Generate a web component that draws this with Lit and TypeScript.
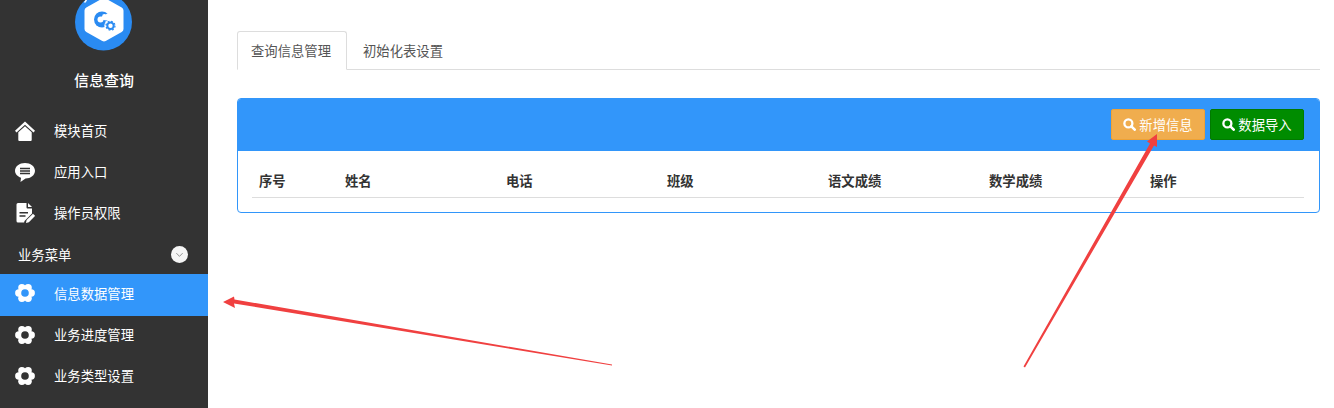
import { LitElement, html, css, svg } from "lit";
import { customElement } from "lit/decorators.js";

const lobes = [0, 60, 120, 180, 240, 300].map((a) => {
  const r = (a * Math.PI) / 180;
  return svg`<circle cx=${(10 + 6.2 * Math.cos(r)).toFixed(2)} cy=${(10 + 6.2 * Math.sin(r)).toFixed(2)} r="3.700"/>`;
});

const search = html`<svg class="mag" viewBox="0 0 14 14" width="13" height="13"><circle cx="5.800" cy="5.800" r="4.300" fill="none" stroke="#fff" stroke-width="2.500"/><path d="M9 9l3.600 3.600" stroke="#fff" stroke-width="2.800" stroke-linecap="round"/></svg>`;

@customElement("app-root")
export class AppRoot extends LitElement {
  static styles = css`
    :host { display: block; width: 1334px; height: 408px; overflow: hidden; position: relative; background: #fff;
      font-family: "Noto Sans CJK SC", "Liberation Sans", sans-serif; font-size: 13.33px; color: #333; }
    .page { display: flex; height: 408px; }
    .side { width: 208px; flex: none; background: #333; color: #fff; display: flex; flex-direction: column; height: 408px; overflow: hidden; }
    .logo { height: 51px; flex: none; display: flex; justify-content: center; align-items: flex-end; }
    .logo svg { display: block; }
    .title { text-align: center; font-size: 15px; line-height: 20px; margin-top: 19px; margin-bottom: 20px; font-weight: 500; }
    .item { height: 41px; flex: none; display: flex; align-items: center; padding-left: 15px; gap: 19px; font-size: 13.33px; box-sizing: border-box; }
    .item svg { width: 20px; height: 20px; flex: none; fill: #fff; display: block; }
    .item.low { padding-bottom: 4px; }
    .item.active { background: #3296fa; height: 42px; }
    .group { height: 41px; flex: none; display: flex; align-items: center; justify-content: space-between; padding: 2px 20px 0 18px; box-sizing: border-box; font-size: 13.33px; }
    .chev { width: 17px; height: 17px; border-radius: 50%; background: #f5f5f5; display: flex; align-items: center; justify-content: center; }
    .main { flex: none; width: 1083px; margin-left: 29px; padding-top: 31px; }
    .tabs { display: flex; height: 38px; border-bottom: 1px solid #ddd; }
    .tab { height: 38px; padding: 0 13px; display: flex; align-items: center; border: 1px solid transparent; color: #555; font-size: 13.33px; border-radius: 3px 3px 0 0; box-sizing: border-box; }
    .tab.on { border-color: #ddd; border-bottom-color: #fff; background: #fff; height: 39px; width: 110px; padding-bottom: 1px; }
    .tab.off { padding-left: 15px; }
    .panel { margin-top: 28px; height: 115px; box-sizing: border-box; border: 1px solid #3296fa; border-radius: 4px; overflow: hidden; }
    .head { height: 52px; background: #3296fa; display: flex; justify-content: flex-end; align-items: flex-start; gap: 5px; padding: 10px 15px 0 0; box-sizing: border-box; }
    .btn { width: 94px; height: 31px; box-sizing: border-box; display: flex; align-items: center; justify-content: center; gap: 3px; color: #fff; font-size: 13.33px; border-radius: 2px; border: 1px solid; }
    .orange { background: #f0ad4e; border-color: #eea236; }
    .green { background: #008c00; border-color: #007a00; }
    .mag { display: block; }
    .row { margin: 14px 15px 0 14px; height: 32px; border-bottom: 1px solid #ddd; display: grid; grid-template-columns: 86px 161px 161px 161px 161px 161px 1fr; align-items: center; font-weight: 700; font-size: 13.33px; color: #333; }
    .row span { padding-left: 7px; padding-bottom: 2px; }
    .arrows { position: absolute; inset: 0; width: 1334px; height: 408px; pointer-events: none; }
  `;

  private icon(kind: string) {
    if (kind === "home")
      return html`<svg viewBox="0 0 20 20"><path d="M10 .5 20 9.700l-1.500 1.700L10 3.700 1.500 11.400 0 9.700z"/><path d="M3.300 11.300 10 5.200l6.700 6.100V19a1 1 0 0 1-1 1H4.300a1 1 0 0 1-1-1z"/></svg>`;
    if (kind === "chat")
      return html`<svg viewBox="0 0 20 20"><path d="M10 1c5.500 0 10 3.300 10 7.800s-4.500 7.700-9.500 7.700L5.500 20l.5-4.300C2.500 14.500 0 12 0 8.800 0 4.300 4.500 1 10 1z"/><path d="M5 5.800h10v1.500H5zM5 8.300h10v1.500H5zM5 10.800h10v1.500H5z" fill="#333"/></svg>`;
    if (kind === "doc")
      return html`<svg viewBox="0 0 20 20"><path d="M1.500 1.500A1.500 1.500 0 0 1 3 0h8.500v4.500a1 1 0 0 0 1 1h4.500v5l-7.500 7.500-.4 1.500H3a1.500 1.500 0 0 1-1.500-1.500z"/><path d="M13 0l4 4h-4z"/><path d="M4.500 9h8.500v1.500H4.500zM4.500 12.300h6v1.500h-6z" fill="#333"/><path d="M11 20l.6-3 6.400-6.300 2.200 2.200-6.300 6.400z"/></svg>`;
    return html`<svg viewBox="0 0 20 20"><circle cx="10" cy="10" r="6.800"/>${lobes}<circle cx="10" cy="10" r="3.800" fill=${"var(--hole, #333)"}/></svg>`;
  }

  private item(kind: string, label: string, cls = "") {
    const style = cls.includes("active") ? "--hole:#3296fa" : "";
    return html`<div class="item ${cls}" style=${style}>${this.icon(kind)}<span>${label}</span></div>`;
  }

  render() {
    const cols = ["序号", "姓名", "电话", "班级", "语文成绩", "数学成绩", "操作"];
    return html`
      <div class="page">
        <aside class="side">
          <div class="logo">
            <svg width="58" height="58" viewBox="0 0 58 58">
              <circle cx="28.500" cy="29" r="28.500" fill="#2a8bf2"/>
              <path d="M29 5a3.500 3.500 0 0 1 1.700.5l16 9a3.500 3.500 0 0 1 1.800 3v18.500a3.500 3.500 0 0 1-1.800 3l-16 9a3.500 3.500 0 0 1-3.400 0l-16-9a3.500 3.500 0 0 1-1.800-3V17.500a3.500 3.500 0 0 1 1.800-3l16-9A3.500 3.500 0 0 1 29 5z" fill="#fff"/>
              <circle cx="27" cy="26.500" r="8" fill="#2a8bf2"/>
              <circle cx="25.500" cy="26.500" r="3" fill="#fff"/>
              <ellipse cx="32.500" cy="25" rx="7" ry="2.500" fill="#fff"/>
              <circle cx="29.500" cy="23.500" r="2.400" fill="#fff"/>
              <circle cx="33.500" cy="23" r="2.800" fill="#fff"/>
              <circle cx="35.500" cy="32.700" r="6.200" fill="#fff"/>
              <circle cx="35.500" cy="32.700" r="3.200" fill="none" stroke="#2a8bf2" stroke-width="2"/>
              <circle cx="35.500" cy="32.700" r="4.500" fill="none" stroke="#2a8bf2" stroke-width="1.200" stroke-dasharray="1.800 1.730"/>
              <path d="M9.500 9.500l2-2.500" stroke="#fff" stroke-width="1.500"/>
            </svg>
          </div>
          <div class="title">信息查询</div>
          ${this.item("home", "模块首页")}
          ${this.item("chat", "应用入口")}
          ${this.item("doc", "操作员权限")}
          <div class="group"><span>业务菜单</span>
            <span class="chev"><svg viewBox="0 0 10 10" width="9" height="9"><path d="M1.500 3.500 5 7l3.500-3.500" fill="none" stroke="#888" stroke-width="1"/></svg></span>
          </div>
          ${this.item("gear", "信息数据管理", "active low")}
          ${this.item("gear", "业务进度管理", "low")}
          ${this.item("gear", "业务类型设置", "low")}
        </aside>
        <main class="main">
          <div class="tabs">
            <div class="tab on">查询信息管理</div>
            <div class="tab off">初始化表设置</div>
          </div>
          <section class="panel">
            <div class="head">
              <div class="btn orange">${search}<span>新增信息</span></div>
              <div class="btn green">${search}<span>数据导入</span></div>
            </div>
            <div class="row">${cols.map((c) => html`<span>${c}</span>`)}</div>
          </section>
        </main>
      </div>
      <svg class="arrows" viewBox="0 0 1334 408">
        <path d="M612 364.500 612 365.500 234 303.500 235 308 223 302 234 296.500 234.500 299.500z" fill="#f04040"/>
        <path d="M1023.500 366.500 1025 367.500 1154 145.500 1157 147 1157 134 1147 141.500 1150 143.500z" fill="#f04040"/>
      </svg>
    `;
  }
}
